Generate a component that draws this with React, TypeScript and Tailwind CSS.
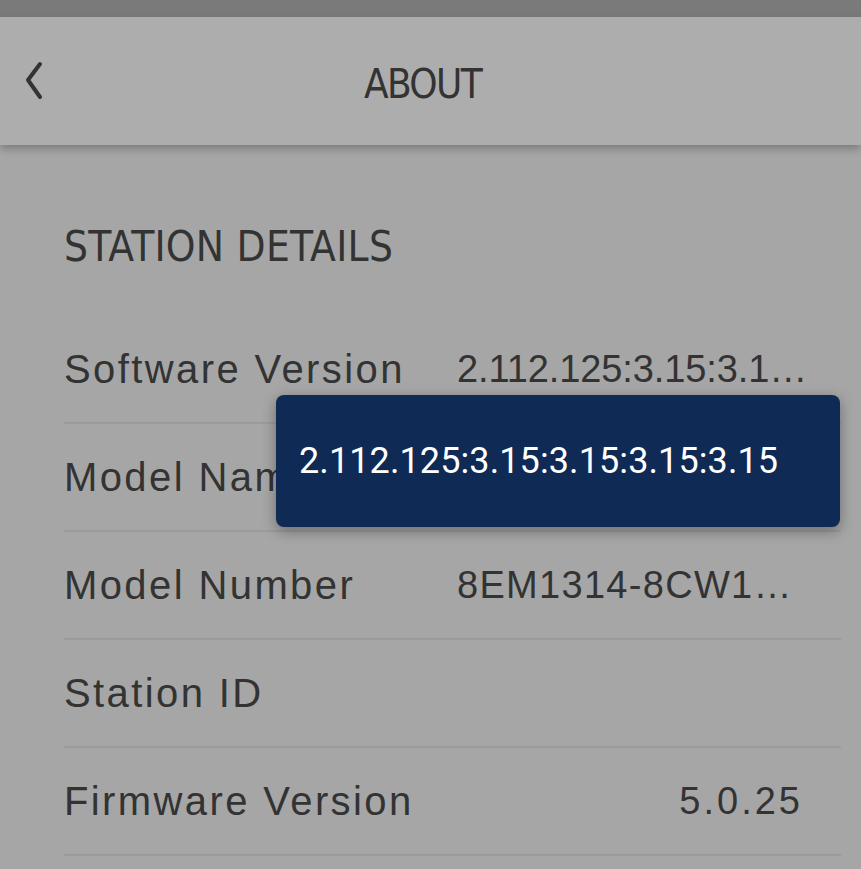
type Row = {
  label: string;
  value: string;
  truncated?: boolean;
  spacing: string;
};

const rows: Row[] = [
  {
    label: "Software Version",
    value: "2.112.125:3.15:3.1…",
    truncated: true,
    spacing: "tracking-[-0.1px]",
  },
  { label: "Model Name", value: "", spacing: "tracking-[1px]" },
  {
    label: "Model Number",
    value: "8EM1314-8CW1…",
    truncated: true,
    spacing: "tracking-[1.3px]",
  },
  { label: "Station ID", value: "", spacing: "tracking-[1px]" },
  {
    label: "Firmware Version",
    value: "5.0.25",
    spacing: "tracking-[3px]",
  },
];

const narrow =
  "font-['Liberation_Sans_Narrow','DejaVu_Sans_Condensed','Liberation_Sans',sans-serif]";

export default function App() {
  return (
    <div className="relative w-[861px] h-[869px] overflow-hidden bg-[#a6a6a6] font-['Liberation_Sans',sans-serif] text-[#333]">
      <div className="h-[17px] bg-[#7a7a7a]" />

      <header className="relative z-10 h-[128px] bg-[#adadad] flex items-center shadow-[0_4px_8px_rgba(0,0,0,0.25)]">
        <button className="absolute left-[22px] top-[42px] text-[#333]">
          <svg width="24" height="44" viewBox="0 0 24 44" fill="none">
            <polyline
              points="18,5 6,21 18,38"
              stroke="currentColor"
              strokeWidth="4"
              strokeLinecap="round"
              strokeLinejoin="round"
            />
          </svg>
        </button>
        <h1
          className={`w-full mt-[5px] pr-[16px] text-center text-[40px] leading-none tracking-[-1.6px] ${narrow}`}
        >
          ABOUT
        </h1>
      </header>

      <main className="pl-[64px] pr-[20px]">
        <h2
          className={`pt-[80px] pb-[47px] text-[42px] leading-[44px] tracking-[0.25px] ${narrow}`}
        >
          STATION DETAILS
        </h2>

        <div>
          {rows.map((row) => (
            <div
              key={row.label}
              className="h-[108px] flex items-center border-b-2 border-[#9b9b9b]"
            >
              <div className="w-[393px] text-[40px] tracking-[2.4px] whitespace-nowrap">
                {row.label}
              </div>
              <div
                className={`flex-1 pr-[38px] text-[38px] whitespace-nowrap overflow-hidden ${row.spacing} ${
                  row.truncated ? "text-left" : "text-right"
                }`}
              >
                {row.value}
              </div>
            </div>
          ))}
        </div>
      </main>

      <div className="absolute left-[276px] top-[395px] w-[564px] h-[132px] rounded-[8px] bg-[#0f2a55] flex items-center pl-[23px] shadow-[0_4px_14px_rgba(0,0,0,0.35)]">
        <span className="text-white text-[36px] tracking-[0.1px] font-['Roboto',sans-serif]">
          2.112.125:3.15:3.15:3.15:3.15
        </span>
      </div>
    </div>
  );
}
